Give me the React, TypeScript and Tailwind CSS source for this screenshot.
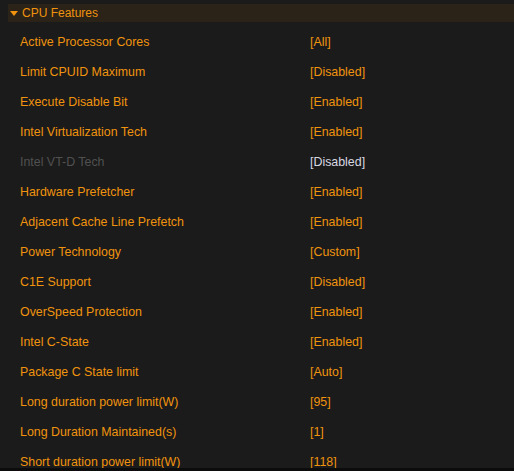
const rows: { label: string; value: string; disabled?: boolean }[] = [
  { label: "Active Processor Cores", value: "[All]" },
  { label: "Limit CPUID Maximum", value: "[Disabled]" },
  { label: "Execute Disable Bit", value: "[Enabled]" },
  { label: "Intel Virtualization Tech", value: "[Enabled]" },
  { label: "Intel VT-D Tech", value: "[Disabled]", disabled: true },
  { label: "Hardware Prefetcher", value: "[Enabled]" },
  { label: "Adjacent Cache Line Prefetch", value: "[Enabled]" },
  { label: "Power Technology", value: "[Custom]" },
  { label: "C1E Support", value: "[Disabled]" },
  { label: "OverSpeed Protection", value: "[Enabled]" },
  { label: "Intel C-State", value: "[Enabled]" },
  { label: "Package C State limit", value: "[Auto]" },
  { label: "Long duration power limit(W)", value: "[95]" },
  { label: "Long Duration Maintained(s)", value: "[1]" },
  { label: "Short duration power limit(W)", value: "[118]" },
];

export default function App() {
  return (
    <div
      className="w-[514px] h-[471px] bg-[#1b1b1b] flex flex-col overflow-hidden text-[12px]"
      style={{ fontFamily: '"Liberation Sans", Arial, sans-serif' }}
    >
      <div className="h-[468px] overflow-hidden pt-1">
        <div className="ml-2 h-[18px] bg-[#2b2218] flex items-center gap-[4px] pl-[2px] text-[#f0930e]">
          <svg width="8" height="5" viewBox="0 0 8 5">
            <path d="M0 0 H8 L4 5 Z" fill="#f0930e" />
          </svg>
          <span>CPU Features</span>
        </div>
        <div className="mt-[5px] text-[12.4px]">
          {rows.map((r) => (
            <div key={r.label} className="h-[30px] flex items-center">
              <span
                className={`w-[310px] pl-5 ${r.disabled ? "text-[#505050]" : "text-[#f0930e]"}`}
              >
                {r.label}
              </span>
              <span className={r.disabled ? "text-[#d8d8e0]" : "text-[#f0930e]"}>{r.value}</span>
            </div>
          ))}
        </div>
      </div>
      <div className="h-[3px] bg-[#0c0c0c]" />
    </div>
  );
}
